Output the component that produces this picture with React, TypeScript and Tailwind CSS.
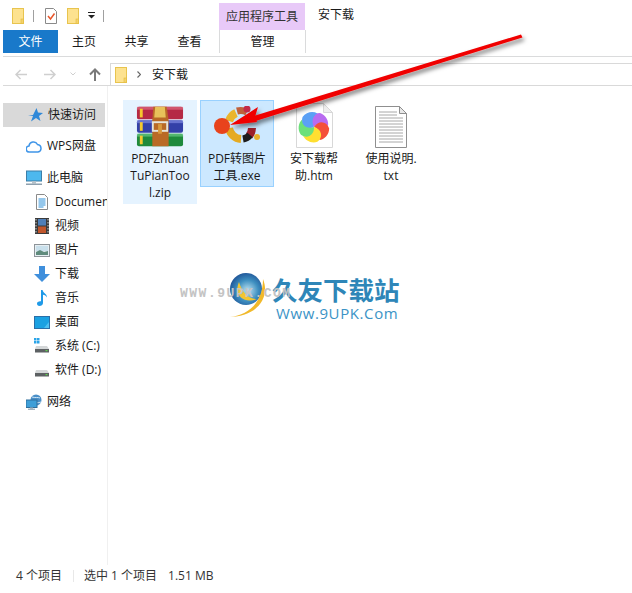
const Folder = ({ className }: { className?: string }) => (
  <svg className={className} width="12" height="16" viewBox="0 0 12 16">
    <rect x="0.5" y="0.5" width="11" height="15" fill="#fde28f" stroke="#e8c44e" />
    <rect x="9" y="11" width="2.5" height="4.5" fill="#f5d36a" stroke="#e0b93f" strokeWidth="0.6" />
  </svg>
);

const SideItem = ({ label, icon, indent, active, mt }: { label: string; icon: React.ReactNode; indent?: boolean; active?: boolean; mt?: string }) => (
  <div className={`h-6 flex items-center whitespace-nowrap overflow-hidden ${active ? 'bg-[#d9d9d9] ml-[3px] pl-[24px] w-[102px]' : indent ? 'pl-[34px]' : 'pl-[26px]'} ${mt || ''}`}>
    <span className="w-[16px] h-[16px] flex items-center justify-center shrink-0">{icon}</span>
    <span className="ml-[5px]">{label}</span>
  </div>
);

const Drive = ({ win }: { win?: boolean }) => (
  <svg width="16" height="16" viewBox="0 0 16 16">
    {win && (
      <g fill="#2aa4e8">
        <rect x="0" y="0" width="2.5" height="2.5" />
        <rect x="3" y="0" width="2.5" height="2.5" />
        <rect x="0" y="3" width="2.5" height="2.5" />
        <rect x="3" y="3" width="2.5" height="2.5" />
      </g>
    )}
    <path d="M2 8h11l2 3H1z" fill="#d4d7d8" />
    <rect x="1" y="11" width="14" height="3.5" fill="#5d6163" />
    <rect x="11.5" y="12" width="2" height="1.2" fill="#61d04f" />
  </svg>
);

const nav = [
  { label: 'Documents', icon: (
    <svg width="12" height="16" viewBox="0 0 12 16">
      <path d="M.5.5h8l3 3v12H.5z" fill="#fff" stroke="#8a8a8a" />
      <path d="M2.5 5h7M2.5 7h7M2.5 9h7M2.5 11h7M2.5 13h5" stroke="#2b8fd8" />
    </svg>
  ) },
  { label: '视频', icon: (
    <svg width="14" height="16" viewBox="0 0 14 16">
      <rect width="14" height="16" fill="#3a3a3a" />
      <rect x="3" y="1" width="8" height="6.5" fill="#4f7fb8" />
      <rect x="3" y="8.5" width="8" height="6.5" fill="#c0562c" />
      <path d="M1 1v14M13 1v14" stroke="#cfcfcf" strokeDasharray="1.5 1.5" />
    </svg>
  ) },
  { label: '图片', icon: (
    <svg width="16" height="13" viewBox="0 0 16 13">
      <rect x=".5" y=".5" width="15" height="12" fill="#e6eef2" stroke="#8d9499" />
      <rect x="2" y="2" width="12" height="5" fill="#c9e0ec" />
      <path d="M2 11V8l4-2 4 2 4-1v4z" fill="#5f8b7c" />
    </svg>
  ) },
  { label: '下载', icon: (
    <svg width="16" height="16" viewBox="0 0 16 16">
      <path d="M5 0h6v8h5l-8 8-8-8h5z" fill="#3f8fdc" />
    </svg>
  ) },
  { label: '音乐', icon: (
    <svg width="14" height="16" viewBox="0 0 14 16">
      <path d="M6 0h1.6c.4 3 4.400 3.600 4.400 7.500-.8-1.500-2.500-2.500-4-2.700V13c0 1.800-1.800 3-3.500 3S2 15 2 13.500 3.800 11 6 11.300z" fill="#1f9ae8" />
    </svg>
  ) },
  { label: '桌面', icon: (
    <svg width="16" height="13" viewBox="0 0 16 13">
      <rect x=".5" y=".5" width="15" height="12" fill="#1ba1e2" stroke="#2a6fa8" />
      <path d="M10 12l5-6v6z" fill="#4fc0f0" />
    </svg>
  ) },
  { label: '系统 (C:)', icon: <Drive win /> },
  { label: '软件 (D:)', icon: <Drive /> },
];

const Pc = () => (
  <svg width="16" height="16" viewBox="0 0 16 16">
    <rect x=".5" y="1" width="15" height="10" fill="#4db8ee" stroke="#3d7ea8" />
    <rect x="6" y="11" width="4" height="2.500" fill="#b5c2ca" />
    <rect x="0" y="13.500" width="16" height="1.500" fill="#8ea0ae" />
  </svg>
);

const Net = () => (
  <svg width="16" height="16" viewBox="0 0 16 16">
    <circle cx="10" cy="6" r="5.500" fill="#4a8fc8" />
    <path d="M6 3c3 1 6 0 8 1M7 8c2 1 5 1 8 0" stroke="#cfe6f5" fill="none" />
    <rect x="0" y="6" width="11" height="7.500" fill="#3f9fd8" stroke="#2f6f9c" />
    <rect x="4" y="13.500" width="3" height="1.200" fill="#9fb2c0" />
    <rect x="2" y="14.700" width="7" height="1" fill="#7f95a5" />
  </svg>
);

const WinRar = () => (
  <svg width="48" height="42" viewBox="0 0 50 42">
    <rect x="1" y="0" width="48" height="13" rx="2" fill="#b52a45" />
    <rect x="1" y="14" width="48" height="13" rx="2" fill="#3340a8" />
    <rect x="1" y="28" width="48" height="13" rx="2" fill="#1f8a3c" />
    <rect x="1" y="0" width="48" height="3" fill="#dd6a80" opacity=".7" />
    <rect x="1" y="14" width="48" height="3" fill="#7d88e0" opacity=".7" />
    <rect x="1" y="28" width="48" height="3" fill="#69c985" opacity=".7" />
    <rect x="4" y="2" width="3" height="9" fill="#f5c92e" />
    <rect x="4" y="16" width="3" height="9" fill="#f5c92e" />
    <rect x="4" y="30" width="3" height="9" fill="#f5c92e" />
    <path d="M18 0h14l2 14v27H17V14z" fill="#b96a26" />
    <path d="M20 0h10l1 11H19z" fill="#e8c25a" />
    <rect x="17.500" y="16" width="15" height="9" fill="none" stroke="#e6e6dc" strokeWidth="2" />
    <rect x="23" y="18" width="4" height="10" fill="#d99b3f" />
  </svg>
);

const Ubuntu = () => (
  <svg className="mb-[4px]" width="47" height="38" viewBox="0 0 47 38" fill="none">
    <path d="M15 22A13 13 0 0 0 27 33" stroke="#e5aa22" strokeWidth="8" />
    <path d="M15 15A13 13 0 0 1 22 7" stroke="#eab52e" strokeWidth="8" />
    <path d="M23 5A14 14 0 0 1 33 6" stroke="#c0603a" strokeWidth="7" />
    <path d="M38 22A13 13 0 0 1 35 30" stroke="#9c1f2a" strokeWidth="8" />
    <path d="M36 29A12 12 0 0 1 29 33" stroke="#1c1c1c" strokeWidth="7" />
    <circle cx="8" cy="20" r="8" fill="#e8431c" />
    <circle cx="33" cy="3" r="3.500" fill="#c22a48" />
    <circle cx="43" cy="31" r="3" fill="#e8b02c" />
  </svg>
);

const blades = ['#b96bf0', '#f4503a', '#ffdf30', '#6ce07a', '#5ba0f5'];

const Swirl = () => (
  <g>
    {blades.map((c, i) => (
      <path
        key={c}
        d="M15 15C10 9 13 1 21 1 27 3 30 9 29 14 25 10 19 11 15 15z"
        fill={c}
        transform={`rotate(${i * 72} 15 15)`}
      />
    ))}
  </g>
);

const Tile = ({ name, lines, icon, selected, hover }: { name: string; lines: string[]; icon: React.ReactNode; selected?: boolean; hover?: boolean }) => (
  <div title={name} className={`w-[74px] flex flex-col items-center border self-start ${selected ? 'bg-[#cce8ff] border-[#99d1ff]' : hover ? 'bg-[#e5f3ff] border-[#e5f3ff]' : 'border-transparent'}`}>
    <div className="h-[47px] w-full flex items-end justify-center">{icon}</div>
    <div className="mt-[2px] mb-[2px] text-center leading-[17px] text-[12px] text-[#1a1a1a]">
      {lines.map(l => (
        <div key={l}>{l}</div>
      ))}
    </div>
  </div>
);

export default function App() {
  return (
    <div className="relative w-[632px] h-[593px] overflow-hidden bg-white flex flex-col text-[12px] text-[#1a1a1a] font-['Open_Sans','Noto_Sans_CJK_SC',sans-serif]">
      {/* title row */}
      <div className="h-[30px] flex shrink-0">
        <div className="flex items-center pl-[12px] pt-[1px]">
          <Folder />
          <span className="ml-[9px] w-px h-[12px] bg-[#a0a0a0]" />
          <svg className="ml-[11px]" width="12" height="16" viewBox="0 0 12 16">
            <path d="M.5.5h8l3 3v12H.5z" fill="#fff" stroke="#8a8a8a" />
            <path d="M3 8l2.500 3L9.500 5.500" stroke="#e8552a" strokeWidth="1.500" fill="none" />
          </svg>
          <Folder className="ml-[10px]" />
          <svg className="ml-[9px]" width="8" height="7" viewBox="0 0 8 7">
            <rect width="7" height="1" fill="#222" />
            <path d="M0 3h7L3.500 6.500z" fill="#222" />
          </svg>
          <span className="ml-[7px] w-px h-[12px] bg-[#a0a0a0]" />
        </div>
        <div className="ml-[115px] mt-[3px] w-[86px] h-[27px] bg-[#e8c9f8] flex items-center justify-center text-[#333]">应用程序工具</div>
        <div className="ml-[13px] flex items-center">安下载</div>
      </div>
      {/* tabs */}
      <div className="h-[23px] flex items-center shrink-0">
        <div className="ml-[3px] w-[55px] h-[23px] bg-[#1979ca] text-white flex items-center justify-center">文件</div>
        <div className="w-[52px] text-center">主页</div>
        <div className="w-[53px] text-center">共享</div>
        <div className="w-[53px] text-center">查看</div>
        <div className="ml-[3px] w-[87px] h-[23px] border-x border-[#dadbdc] flex items-center justify-center">管理</div>
      </div>
      <div className="mt-[3px] ml-[3px] h-px bg-[#dadbdc] shrink-0" />
      {/* address row */}
      <div className="h-[28px] flex items-end shrink-0">
        <div className="w-[110px] h-[22px] flex items-center pl-[15px]">
          <svg width="12" height="11" viewBox="0 0 12 11" fill="none" stroke="#cfcfcf" strokeWidth="1.500">
            <path d="M12 5.500H1M5.500 1L1 5.500 5.500 10" />
          </svg>
          <svg className="ml-[17px]" width="12" height="11" viewBox="0 0 12 11" fill="none" stroke="#cfcfcf" strokeWidth="1.500">
            <path d="M0 5.500h11M6.500 1L11 5.500 6.500 10" />
          </svg>
          <svg className="ml-[14px]" width="6" height="4" viewBox="0 0 6 4" fill="none" stroke="#cfcfcf">
            <path d="M.5.500L3 3 5.500.500" />
          </svg>
          <svg className="ml-[13px]" width="12" height="13" viewBox="0 0 12 13" fill="none" stroke="#7a7a7a" strokeWidth="2">
            <path d="M6 13V1.500M1 6.500l5-5 5 5" />
          </svg>
        </div>
        <div className="flex-1 h-[22px] border border-b-0 border-r-0 border-[#d9d9d9] flex items-center pl-[4px]">
          <Folder />
          <svg className="ml-[10px]" width="4" height="7" viewBox="0 0 4 7" fill="none" stroke="#666" strokeWidth="1.200">
            <path d="M.5.500l3 3-3 3" />
          </svg>
          <span className="ml-[11px]">安下载</span>
        </div>
      </div>
      <div className="ml-[3px] h-px bg-[#d9d9d9] shrink-0" />
      {/* body */}
      <div className="flex flex-1 min-h-0">
        <div className="w-[108px] shrink-0 border-r border-[#f0f0f0] pt-[17px] overflow-hidden">
          <SideItem active label="快速访问" icon={
            <svg width="16" height="16" viewBox="0 0 16 16">
              <path d="M9.500 1l1.500 4.500 5 .5-4 3 1.500 5-4.500-3-5 3.500 2-5.500L1 9l5-1z" fill="#2f88d8" />
            </svg>
          } />
          <SideItem mt="mt-[7px]" label="WPS网盘" icon={
            <svg width="16" height="13" viewBox="0 0 16 13" fill="none" stroke="#3f95e8" strokeWidth="1.500">
              <path d="M4 12H3.500a3 3 0 0 1-.5-6 4.500 4.500 0 0 1 8.500-1.500A3.800 3.800 0 0 1 12 12z" />
            </svg>
          } />
          <SideItem mt="mt-[8px]" label="此电脑" icon={<Pc />} />
          {nav.map(n => (
            <SideItem key={n.label} label={n.label} icon={n.icon} indent />
          ))}
          <SideItem mt="mt-[8px]" label="网络" icon={<Net />} />
        </div>
        <div className="flex-1 flex gap-[3px] pl-[15px] pt-[14px] items-start">
          <Tile name="PDFZhuanTuPianTool.zip" hover lines={['PDFZhuan', 'TuPianToo', 'l.zip']} icon={<WinRar />} />
          <Tile name="PDF转图片工具.exe" selected lines={['PDF转图片', '工具.exe']} icon={<Ubuntu />} />
          <Tile name="安下载帮助.htm" lines={['安下载帮', '助.htm']} icon={
            <svg width="37" height="45" viewBox="0 0 37 45">
              <path d="M.5.500h27l9 9v35H.5z" fill="#fff" stroke="#d8d8d8" />
              <path d="M27.500.500v9h9z" fill="#eee" stroke="#d8d8d8" />
              <g transform="translate(3 9)"><Swirl /></g>
            </svg>
          } />
          <Tile name="使用说明.txt" lines={['使用说明.', 'txt']} icon={
            <svg width="32" height="42" viewBox="0 0 32 42">
              <path d="M.5.500h24l7 7v34H.5z" fill="#fff" stroke="#8f8f8f" />
              <path d="M24.500.500v7h7z" fill="#e8e8e8" stroke="#8f8f8f" />
              <path d="M4 6h18M4 9h18M4 12h24M4 15h24M4 18h24M4 21h24M4 24h24M4 27h24M4 30h24M4 33h24M4 36h24" stroke="#a8a8a8" />
            </svg>
          } />
        </div>
      </div>
      {/* status bar */}
      <div className="h-[22px] mb-[6px] flex items-center shrink-0 text-[#333]">
        <span className="ml-[16px] w-[47px] whitespace-nowrap">4 个项目</span>
        <span className="ml-[10px] w-px h-[12px] bg-[#e8e8e8]" />
        <span className="ml-[10px] whitespace-nowrap">选中 1 个项目</span>
        <span className="ml-[11px] whitespace-nowrap">1.51 MB</span>
      </div>

      {/* watermark */}
      <div className="absolute left-[180px] top-[272px] w-[250px] h-[50px] pointer-events-none">
        <svg className="absolute left-[46px] top-0" width="44" height="48" viewBox="0 0 44 48">
          <defs>
            <radialGradient id="globe" cx="55%" cy="55%" r="60%">
              <stop offset="0%" stopColor="#bfe3f2" />
              <stop offset="55%" stopColor="#3e8fc0" />
              <stop offset="100%" stopColor="#1c4f94" />
            </radialGradient>
          </defs>
          <circle cx="20" cy="17" r="16" fill="url(#globe)" />
          <path d="M13 10C7 24 19 32 31 27c-9 0-15-7-18-17z" fill="#f4c52e" />
          <path d="M37 7c8 20-8 38-33 38 18-2 33-14 33-38z" fill="#f1b92a" />
        </svg>
        <div className="absolute left-[92px] top-[1px] text-[25.500px] leading-[32px] font-bold text-[#2e86b8] whitespace-nowrap font-['Noto_Sans_CJK_SC',sans-serif]">久友下载站</div>
        <div className="absolute left-[96px] top-[32px] text-[15px] leading-[18px] tracking-[0.6px] text-[#3b93c6] whitespace-nowrap font-['Open_Sans',sans-serif]">Www.9UPK.Com</div>
        <div className="absolute left-0 top-[15px] text-[13px] leading-[14px] font-bold tracking-[1.500px] text-[#c4c4c4] whitespace-nowrap font-['Liberation_Mono',monospace]">WWW.9UPK.COM</div>
      </div>

      {/* red arrow */}
      <svg className="absolute left-0 top-0 pointer-events-none" width="632" height="593" viewBox="0 0 632 593">
        <defs>
          <filter id="shadow" x="-10%" y="-30%" width="120%" height="170%">
            <feDropShadow dx="2" dy="3" stdDeviation="2" floodColor="#000" floodOpacity=".5" />
          </filter>
        </defs>
        <g filter="url(#shadow)" fill="#f00000">
          <path d="M521 34.500l1.500 3L254 121.500l-2-5z" />
          <path d="M230 125l28-18-3 10 2 5z" />
        </g>
      </svg>
    </div>
  );
}
